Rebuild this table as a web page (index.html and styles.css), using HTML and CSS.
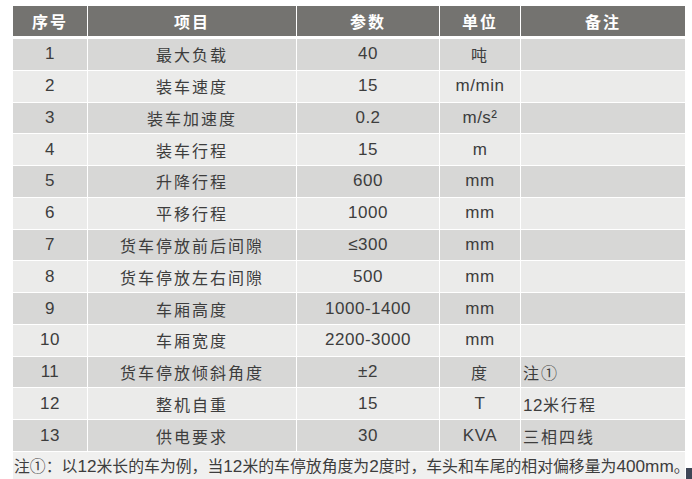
FILE: index.html
```html
<!DOCTYPE html>
<html lang="zh-CN">
<head>
<meta charset="utf-8">
<title>参数表</title>
<link rel="stylesheet" href="styles.css">
</head>
<body>
<div class="page">
<table class="spec">
  <colgroup>
    <col class="c1"><col class="c2"><col class="c3"><col class="c4"><col class="c5">
  </colgroup>
  <thead>
    <tr><th>序号</th><th>项目</th><th>参数</th><th>单位</th><th>备注</th></tr>
  </thead>
  <tbody>
    <tr class="odd"><td class="n">1</td><td class="cn">最大负载</td><td class="n">40</td><td class="cn">吨</td><td class="note-cell"></td></tr>
    <tr class="even"><td class="n">2</td><td class="cn">装车速度</td><td class="n">15</td><td class="n">m/min</td><td class="note-cell"></td></tr>
    <tr class="odd"><td class="n">3</td><td class="cn">装车加速度</td><td class="n">0.2</td><td class="n">m/s²</td><td class="note-cell"></td></tr>
    <tr class="even"><td class="n">4</td><td class="cn">装车行程</td><td class="n">15</td><td class="n">m</td><td class="note-cell"></td></tr>
    <tr class="odd"><td class="n">5</td><td class="cn">升降行程</td><td class="n">600</td><td class="n">mm</td><td class="note-cell"></td></tr>
    <tr class="even"><td class="n">6</td><td class="cn">平移行程</td><td class="n">1000</td><td class="n">mm</td><td class="note-cell"></td></tr>
    <tr class="odd"><td class="n">7</td><td class="cn">货车停放前后间隙</td><td class="n">≤300</td><td class="n">mm</td><td class="note-cell"></td></tr>
    <tr class="even"><td class="n">8</td><td class="cn">货车停放左右间隙</td><td class="n">500</td><td class="n">mm</td><td class="note-cell"></td></tr>
    <tr class="odd"><td class="n">9</td><td class="cn">车厢高度</td><td class="n">1000-1400</td><td class="n">mm</td><td class="note-cell"></td></tr>
    <tr class="even"><td class="n">10</td><td class="cn">车厢宽度</td><td class="n">2200-3000</td><td class="n">mm</td><td class="note-cell"></td></tr>
    <tr class="odd"><td class="n">11</td><td class="cn">货车停放倾斜角度</td><td class="n">±2</td><td class="cn">度</td><td class="note-cell cn">注①</td></tr>
    <tr class="even"><td class="n">12</td><td class="cn">整机自重</td><td class="n">15</td><td class="n">T</td><td class="note-cell"><span class="n">12</span><span class="cn">米行程</span></td></tr>
    <tr class="odd"><td class="n">13</td><td class="cn">供电要求</td><td class="n">30</td><td class="n">KVA</td><td class="note-cell cn">三相四线</td></tr>
    <tr class="foot"><td colspan="5">注①：以<span class="fn">12</span>米长的车为例，当<span class="fn">12</span>米的车停放角度为<span class="fn">2</span>度时，车头和车尾的相对偏移量为<span class="fn">400mm</span>。</td></tr>
  </tbody>
</table>
<div class="corner"></div>
</div>
</body>
</html>
```

FILE: styles.css
```css
html, body {
  margin: 0;
  padding: 0;
  background: #ffffff;
}

.page {
  position: relative;
  width: 692px;
  height: 479px;
  overflow: hidden;
  padding: 6px 0 0 13px;
  box-sizing: border-box;
}

.spec {
  border-collapse: separate;
  border-spacing: 0;
  table-layout: fixed;
  width: 672px;
  font-family: "Liberation Sans", "Noto Sans CJK SC", sans-serif;
  color: #3d3d3d;
}

.c1 { width: 74px; }
.c2 { width: 209px; }
.c3 { width: 143px; }
.c4 { width: 81px; }
.c5 { width: 165px; }

.spec th,
.spec td {
  padding: 0;
  text-align: center;
  vertical-align: middle;
  white-space: nowrap;
}

.spec th + th,
.spec td + td {
  border-left: 1px solid #ffffff;
}

.spec th {
  height: 30px;
  background: #747370;
  color: #ffffff;
  font-family: "Noto Sans CJK SC", sans-serif;
  font-weight: 700;
  font-size: 16px;
  letter-spacing: 2px;
  border-bottom: 2px solid #ffffff;
}

.spec td {
  height: 30.77px;
  border-top: 1px solid #ffffff;
  font-size: 16px;
}

.spec tr.odd td { background: #d7d7d6; }
.spec tr.even td { background: #ebebea; }

.spec .n {
  font-family: "Liberation Sans", "Noto Sans CJK SC", sans-serif;
  font-size: 17px;
  letter-spacing: 0.5px;
}

.spec .cn {
  font-family: "Noto Sans CJK SC", sans-serif;
  font-size: 16px;
  letter-spacing: 2px;
}

.spec td.note-cell {
  text-align: left;
  padding-left: 2px;
}

.spec tr.foot td {
  background: #f0f0ef;
  text-align: left;
  padding-left: 1px;
  height: 28px;
  font-family: "Noto Sans CJK SC", sans-serif;
  font-size: 15.85px;
  letter-spacing: 0;
}

.spec tr.foot .fn {
  font-family: "Liberation Sans", sans-serif;
  font-size: 17.2px;
}

.corner {
  position: absolute;
  right: 0;
  bottom: 0;
  width: 6px;
  height: 11px;
  background: #3e4656;
}
```
